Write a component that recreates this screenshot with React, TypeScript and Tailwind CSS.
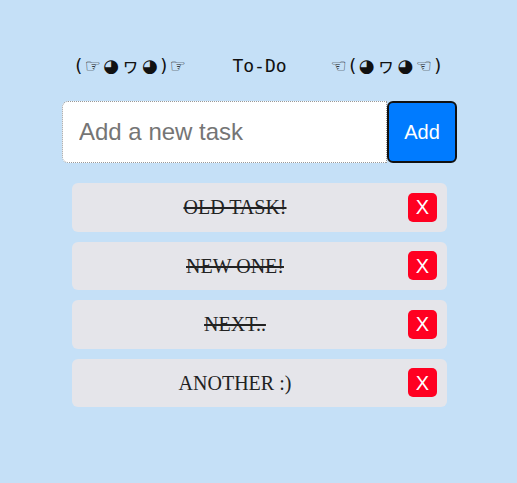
import React, { useState } from 'react';

type Task = { id: number; text: string; done: boolean };

const initialTasks: Task[] = [
    { id: 1, text: 'OLD TASK!', done: true },
    { id: 2, text: 'NEW ONE!', done: true },
    { id: 3, text: 'NEXT..', done: true },
    { id: 4, text: 'ANOTHER :)', done: false },
];

const kaomoji = { fontFamily: '"DejaVu Sans", "Noto Sans CJK JP", sans-serif' };

const App: React.FC = () => {
    const [tasks, setTasks] = useState<Task[]>(initialTasks);
    const [value, setValue] = useState('');

    const addTask = () => {
        if (!value.trim()) return;
        setTasks([...tasks, { id: Date.now(), text: value, done: false }]);
        setValue('');
    };

    return (
        <div className="min-h-screen bg-[#c5e0f7] flex flex-col items-center pt-[52px] pl-[2px]">
            {/* Header */}
            <div
                className="flex justify-center items-center gap-[44px] text-[18px] leading-[28px] text-[#111] mb-[21px]"
                style={{ fontFamily: '"DejaVu Sans Mono", monospace' }}
            >
                <span className="tracking-[2.5px]" style={kaomoji}>(☞◕ヮ◕)☞</span>
                <span>To-Do</span>
                <span className="tracking-[2.5px]" style={kaomoji}>☜(◕ヮ◕☜)</span>
            </div>

            {/* Input row */}
            <div className="flex w-[395px] h-[62px] mb-[20px]">
                <input
                    value={value}
                    onChange={e => setValue(e.target.value)}
                    placeholder="Add a new task"
                    className="flex-1 min-w-0 h-full bg-white border border-dotted border-[#999] rounded-l-[6px] pl-[16px] text-[24px] text-[#222] placeholder:text-[#757575] outline-none font-['Liberation_Sans',Arial,sans-serif]"
                />
                <button
                    onClick={addTask}
                    className="w-[70px] h-full bg-[#007bff] border-2 border-[#111] rounded-[6px] text-white text-[20px] font-['Liberation_Sans',Arial,sans-serif]"
                >
                    Add
                </button>
            </div>

            {/* Task list */}
            <ul className="w-[375px] flex flex-col gap-[10px]">
                {tasks.map(task => (
                    <li
                        key={task.id}
                        className="flex items-center bg-[#e5e5ea] rounded-[6px] p-[10px] h-[48.5px]"
                    >
                        <span
                            className={`flex-1 text-center text-[20px] text-[#222] font-['Liberation_Serif','Times_New_Roman',serif] ${task.done ? 'line-through' : ''}`}
                        >
                            {task.text}
                        </span>
                        <button
                            onClick={() => setTasks(tasks.filter(t => t.id !== task.id))}
                            className="ml-[20px] w-[29px] h-[29px] bg-[#ff0021] rounded-[5px] text-white text-[20px] leading-none flex items-center justify-center font-['Liberation_Sans',Arial,sans-serif]"
                        >
                            X
                        </button>
                    </li>
                ))}
            </ul>
        </div>
    );
};

export default App;
